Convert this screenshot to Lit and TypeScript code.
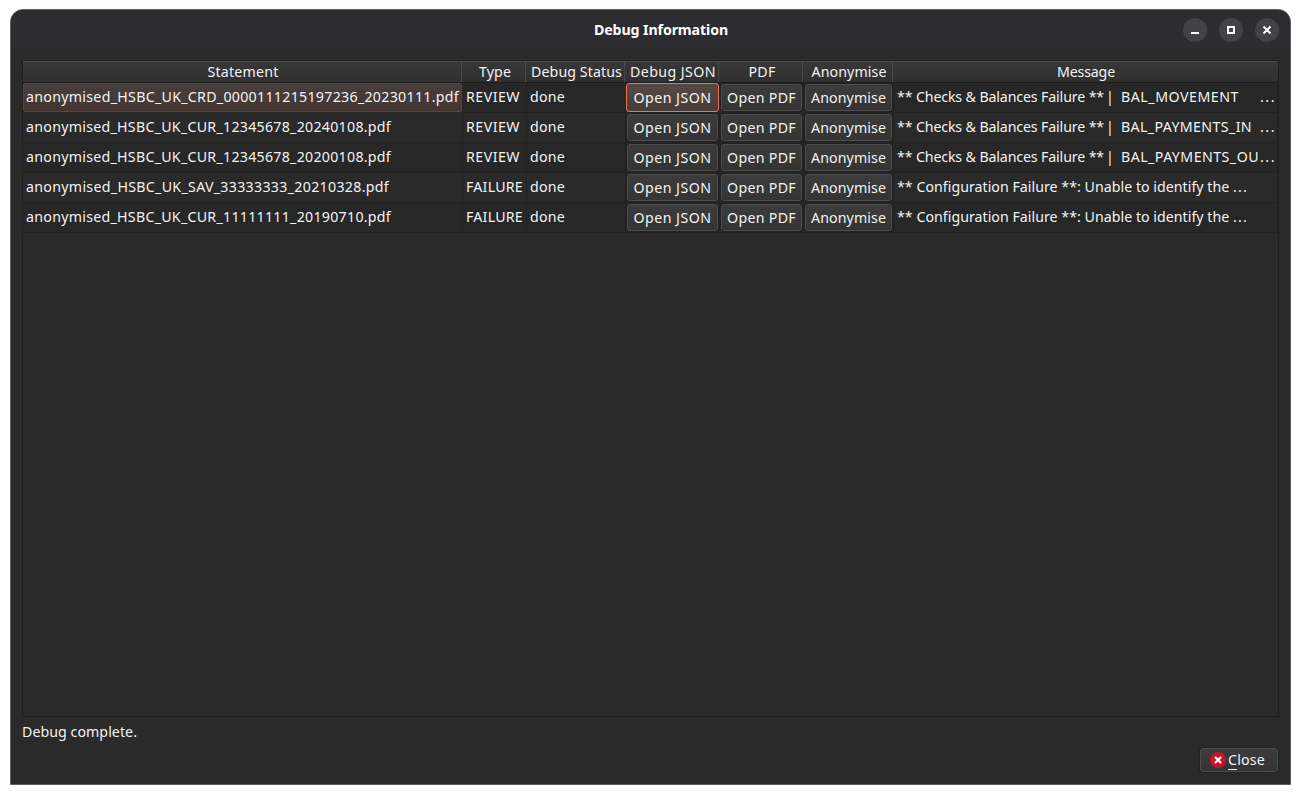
import { LitElement, html, css, svg } from "lit";
import { customElement, property } from "lit/decorators.js";

/** A single line of text tracked so that it occupies a given advance width. */
@customElement("fit-text")
class FitText extends LitElement {
  @property() text = "";
  @property({ type: Number }) w = 0;
  @property({ type: Boolean }) mnemonic = false;
  static styles = css`
    :host { display: inline-block; white-space: pre; flex: none; }
    .u { box-shadow: 0 1px 0 #f3f3f3; }
  `;
  updated() {
    const line = this.renderRoot.querySelector("span") as HTMLElement;
    line.style.letterSpacing = "0px";
    const natural = line.getBoundingClientRect().width;
    line.style.letterSpacing = `${(this.w - natural) / this.text.length}px`;
  }
  render() {
    return this.mnemonic
      ? html`<span><span class="u">${this.text[0]}</span>${this.text.slice(1)}</span>`
      : html`<span>${this.text}</span>`;
  }
}

const t = (text: string, w: number) => html`<fit-text .text=${text} .w=${w}></fit-text>`;

const headers: [string, number][] = [
  ["Statement", 71], ["Type", 32], ["Debug Status", 91], ["Debug JSON", 86],
  ["PDF", 27], ["Anonymise", 75], ["Message", 58],
];

interface Row { file: string; w: number; type: string; code?: string; cw?: number; }
const rows: Row[] = [
  { file: "anonymised_HSBC_UK_CRD_0000111215197236_20230111.pdf", w: 433, type: "REVIEW", code: "BAL_MOVEMENT", cw: 118 },
  { file: "anonymised_HSBC_UK_CUR_12345678_20240108.pdf", w: 365, type: "REVIEW", code: "BAL_PAYMENTS_IN", cw: 131 },
  { file: "anonymised_HSBC_UK_CUR_12345678_20200108.pdf", w: 365, type: "REVIEW", code: "BAL_PAYMENTS_OU", cw: 138 },
  { file: "anonymised_HSBC_UK_SAV_33333333_20210328.pdf", w: 363, type: "FAILURE" },
  { file: "anonymised_HSBC_UK_CUR_11111111_20190710.pdf", w: 365, type: "FAILURE" },
];

@customElement("app-root")
class AppRoot extends LitElement {
  static styles = css`
    :host {
      display: block; box-sizing: border-box; width: 1301px; height: 795px;
      padding: 9px 10px 10px; background: #fff; color: #f3f3f3;
      font: 14.2px/20px "Noto Sans", "Open Sans", sans-serif;
    }
    * { box-sizing: border-box; }
    .window {
      height: 776px; display: flex; flex-direction: column; overflow: hidden;
      background: #2a2a2a; border: 1px solid #606062; border-radius: 13px 13px 0 0;
    }
    .title {
      height: 39px; flex: none; background: #2d2c31; display: grid;
      grid-template-columns: 1fr auto 1fr; align-items: center; padding: 0 11px 0 32px;
      font-weight: 700; color: #fff;
    }
    .title fit-text { grid-column: 2; }
    .controls { display: flex; gap: 12px; justify-content: flex-end; padding-top: 1px; }
    .controls svg { display: block; }
    .body { flex: 1; padding: 11px 11px 11px; display: flex; flex-direction: column; }
    .table { height: 657px; width: 1257px; border: 1px solid #1f1f1f; flex: none; }
    .grid { display: grid; grid-template-columns: 440px 64px 99px 94px 84px 90px 384px; }
    .head {
      height: 22px; border-top: 1px solid #4d4d4d; border-bottom: 1px solid #1d1d1d;
      background: linear-gradient(#373737, #303030);
    }
    .head > div { display: flex; justify-content: center; align-items: center; padding-left: 2px; }
    .head > div:last-child { padding-left: 0; }
    .head > div:not(:last-child) { border-right: 1px solid #4a4a4a; margin-right: 1px; }
    .row { height: 30px; }
    .row:nth-child(odd) { background: #272727; }
    .cell {
      border-right: 1px solid #222; border-bottom: 1px solid #222; display: flex;
      padding: 4px 0 0 3px; min-width: 0; height: 30px;
    }
    .selected {
      border: 1px solid #693f33; border-radius: 2px; padding: 3px 0 0 2px; width: 439px;
      background: linear-gradient(#463f3e, #443531); height: 29px;
    }
    .action { padding: 1px; }
    .message { padding-left: 3px; }
    .code { padding-left: 9px; width: 148px; flex: none; display: flex; }
    .btn {
      flex: 1; height: 27px; font: inherit; color: inherit; padding: 0; display: flex;
      justify-content: center; align-items: center; border: 1px solid #4c4c4c;
      border-radius: 3px; background: linear-gradient(#3c3c3c, #343434);
      box-shadow: 0 0 0 1px #222;
    }
    .focus {
      border: 1px solid #ee7650; margin: -1px 0 0 -1px; height: 29px; flex: none; width: 93px;
      background: linear-gradient(#554946, #4a3c38); box-shadow: none;
    }
    .status { margin-top: 5px; height: 20px; }
    .footer { display: flex; justify-content: flex-end; margin-top: 6px; }
    .close { flex: none; width: 78px; height: 24px; gap: 2px; padding: 0 3px 0 0; margin-right: 1px; }
  `;

  control(mark: unknown) {
    return html`<svg width="24" height="24" viewBox="0 0 24 24"><circle cx="12" cy="12" r="12" fill="#434246"/>${mark}</svg>`;
  }

  row(r: Row, i: number) {
    return html`<div class="grid row">
      <div class="cell ${i === 0 ? "selected" : ""}">${t(r.file, r.w)}</div>
      <div class="cell">${t(r.type, r.type === "REVIEW" ? 54 : 57)}</div>
      <div class="cell">${t("done", 35)}</div>
      <div class="cell action"><button class="btn ${i === 0 ? "focus" : ""}">${t("Open JSON", 78)}</button></div>
      <div class="cell action"><button class="btn">${t("Open PDF", 69)}</button></div>
      <div class="cell action"><button class="btn">${t("Anonymise", 75)}</button></div>
      <div class="cell message">${r.code
        ? html`${t("** Checks & Balances Failure **", 207)}${t(" |", 8)}<span class="code">${t(r.code, r.cw ?? 0)}</span>${t("...", 16)}`
        : html`${t("** Configuration Failure **: Unable to identify the ", 336)}${t("...", 15)}`}</div>
    </div>`;
  }

  render() {
    return html`<div class="window">
      <div class="title">
        ${t("Debug Information", 134)}
        <div class="controls">
          ${this.control(svg`<rect x="8" y="14" width="8" height="2" fill="#fff"/>`)}
          ${this.control(svg`<rect x="9" y="9" width="6" height="6" fill="none" stroke="#fff" stroke-width="2"/>`)}
          ${this.control(svg`<path d="M8.5 8.5l7 7m0-7l-7 7" stroke="#fff" stroke-width="2"/>`)}
        </div>
      </div>
      <div class="body">
        <div class="table">
          <div class="grid head">${headers.map(([h, w]) => html`<div>${t(h, w)}</div>`)}</div>
          <div>${rows.map((r, i) => this.row(r, i))}</div>
        </div>
        <div class="status">${t("Debug complete.", 115)}</div>
        <div class="footer">
          <button class="btn close">
            <svg width="16" height="16" viewBox="0 0 16 16"><circle cx="8" cy="8" r="8" fill="#c7162b"/><path d="M5 5l6 6m0-6l-6 6" stroke="#fff" stroke-width="2"/></svg>
            <fit-text .text=${"Close"} .w=${37} .mnemonic=${true}></fit-text>
          </button>
        </div>
      </div>
    </div>`;
  }
}
